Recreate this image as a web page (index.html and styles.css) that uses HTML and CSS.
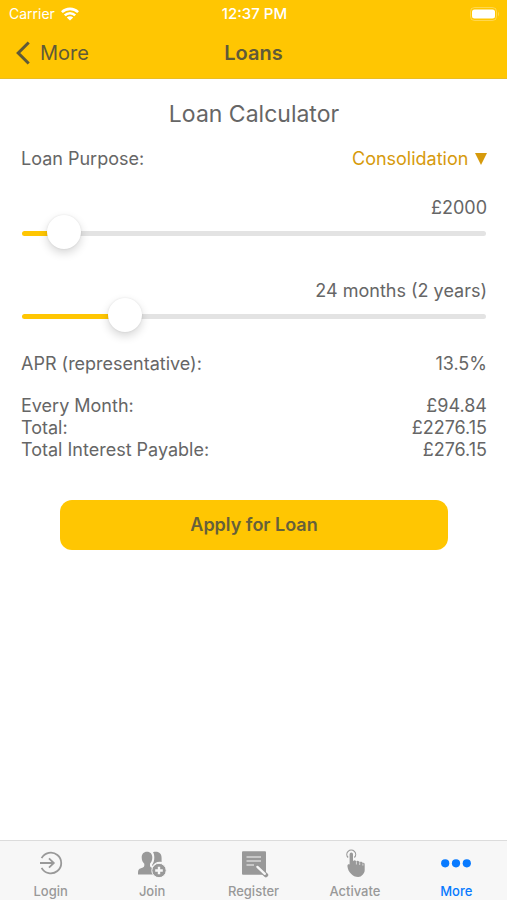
FILE: index.html
```html
<!DOCTYPE html>
<html lang="en">
<head>
<meta charset="utf-8">
<meta name="viewport" content="width=device-width, initial-scale=1">
<title>Loans</title>
<link rel="stylesheet" href="styles.css">
</head>
<body>
<header class="top">
  <div class="status">
    <span class="carrier">Carrier
      <svg width="18" height="14" viewBox="0 0 18 14" aria-hidden="true">
        <g fill="none" stroke="currentColor" stroke-width="2.6">
          <path d="M.9 5.2a11.5 11.5 0 0 1 16.2 0"/>
          <path d="M3.8 8.400a7.400 7.400 0 0 1 10.400 0"/>
        </g>
        <path fill="currentColor" d="M9 13.600 5.800 10.500a4.600 4.600 0 0 1 6.400 0z"/>
      </svg>
    </span>
    <span class="time">12:37 PM</span>
    <svg class="battery" width="30" height="14" viewBox="0 0 30 14" aria-hidden="true">
      <rect x=".5" y=".5" width="26" height="13" rx="4" fill="none" stroke="#fff" stroke-opacity=".3"/>
      <rect x="2" y="2.500" width="23" height="9" rx="2.500" fill="#fff"/>
      <path d="M28 4.500q2 2.500 0 5z" fill="#fff" fill-opacity=".3"/>
    </svg>
  </div>
  <nav class="bar">
    <a class="back" href="#more">
      <svg width="15" height="24" viewBox="0 0 15 24" aria-hidden="true"><path d="M13.700 1.500 3.200 12l10.500 10.500" fill="none" stroke="currentColor" stroke-width="3"/></svg>
      More
    </a>
    <h1 class="title">Loans</h1>
  </nav>
</header>

<main class="content">
  <h2 class="heading">Loan Calculator</h2>
  <div class="row purpose">
    <label for="purpose">Loan Purpose:</label>
    <span class="picker">
      <select id="purpose"><option>Consolidation</option></select>
      <svg width="12" height="12" viewBox="0 0 12 12" aria-hidden="true"><path d="M0 0h12L6 12z" fill="currentColor"/></svg>
    </span>
  </div>
  <div class="slider">
    <output for="amount">£2000</output>
    <input id="amount" type="range" min="1000" max="18000" step="100" value="2000" aria-label="Loan amount" style="--fill: 9%">
  </div>
  <div class="slider">
    <output for="term">24 months (2 years)</output>
    <input id="term" type="range" min="12" max="72" value="24" aria-label="Loan term" style="--fill: 22%">
  </div>
  <dl class="figures">
    <div class="row rate"><dt>APR (representative):</dt><dd>13.5%</dd></div>
    <div class="row"><dt>Every Month:</dt><dd>£94.84</dd></div>
    <div class="row"><dt>Total:</dt><dd>£2276.15</dd></div>
    <div class="row"><dt>Total Interest Payable:</dt><dd>£276.15</dd></div>
  </dl>
  <button class="apply" type="button">Apply for Loan</button>
</main>

<nav class="tabs">
  <a href="#login">
    <svg width="30" height="30" viewBox="0 0 30 30" aria-hidden="true">
      <g fill="none" stroke="currentColor" stroke-width="1.800">
        <path d="M5.600 10.200A10.400 10.400 0 1 1 5.600 19.800"/>
        <path d="M4 15h13.500M13 10.300l4.800 4.700-4.800 4.700"/>
      </g>
    </svg>
    Login
  </a>
  <a href="#join">
    <svg width="30" height="30" viewBox="0 0 30 30" aria-hidden="true">
      <g fill="currentColor">
        <path d="M10 3.800c3.400 0 5.300 2.300 5.300 5.700 0 2.800-1 5-2.300 6.200v2.100c0 1.600 1.900 2 3.600 2.700.2 2.400.2 4.100.2 6.100H1c0-4 .3-5.300 2.300-6.100 1.800-.7 4-1.100 4-2.700v-2.100C5.800 14.500 4.700 12.300 4.700 9.500c0-3.400 1.900-5.700 5.300-5.700z"/>
        <path d="M16 4.300c1-.4 1.700-.5 2.700-.5 4 0 5.900 2.300 5.900 6.100v4.200c-4-.9-7.500.8-9 4l-.6-1.100c1.500-1.700 2.300-4.400 2.300-7.300 0-2.300-.4-4-1.300-5.400z"/>
        <circle cx="22" cy="22.500" r="7.200" stroke="#f7f7f7"/>
      </g>
      <path d="M22 18.700v7.600M18.200 22.500h7.600" stroke="#f7f7f7" stroke-width="2.400"/>
    </svg>
    Join
  </a>
  <a href="#register">
    <svg width="30" height="30" viewBox="0 0 30 30" aria-hidden="true">
      <rect x="3" y="3.300" width="24" height="23.500" rx="1" fill="currentColor"/>
      <path d="M7.500 9h14.500M7.500 13h14.500M7.500 17H15" stroke="#f7f7f7" stroke-width="1.100"/>
      <path d="m17.800 18.300 9.200 8.800" stroke="currentColor" stroke-width="4.400" stroke-linecap="round"/>
      <path d="m18.400 18.900 7.400 7" stroke="#f7f7f7" stroke-width="2.300" stroke-linecap="round"/>
    </svg>
    Register
  </a>
  <a href="#activate">
    <svg width="30" height="30" viewBox="0 0 30 30" aria-hidden="true">
      <path d="M8.100 9.500a4.400 4.400 0 1 1 6.300 0" fill="none" stroke="currentColor" stroke-width="1.200"/>
      <path fill="currentColor" d="M9.600 6.200a1.700 1.700 0 0 1 3.400 0v7q.8-1 2-.8 1 .1 1.300 1 .8-.8 2-.5 1 .2 1.300 1.200.8-.7 1.900-.3 1 .4 1.200 1.200.8-.5 1.500.1.500.5.500 1.600V22c0 2-.8 3.300-1.800 4.500-1.500 1.700-3 2.500-4.700 2.500-3 0-5.200-1-6.900-3-2.500-2-3.500-5-3.900-8 .1-1.600 1-2 2.200-1.500z"/>
      <path d="M16.400 13.500v3M19.700 14.300v2.700M22.900 15.600v2" stroke="#f7f7f7" stroke-width=".7"/>
    </svg>
    Activate
  </a>
  <a class="active" href="#more" aria-current="page">
    <svg width="30" height="30" viewBox="0 0 30 30" aria-hidden="true">
      <g fill="currentColor"><circle cx="4.200" cy="15.300" r="4.100"/><circle cx="15" cy="15.300" r="4.100"/><circle cx="25.800" cy="15.300" r="4.100"/></g>
    </svg>
    More
  </a>
</nav>
</body>
</html>
```
FILE: styles.css
```css
* {
  box-sizing: border-box;
}

body {
  margin: 0;
  min-height: 100vh;
  display: flex;
  flex-direction: column;
  background: #fff;
  color: #666;
  font: 18px/22px Inter, "Liberation Sans", sans-serif;
}

a {
  color: inherit;
  text-decoration: none;
}

.top {
  background: #ffc602;
  border-bottom: 1px solid #e9bd24;
}

.status {
  display: grid;
  grid-template-columns: 1fr auto 1fr;
  align-items: center;
  height: 27px;
  padding: 0 7px 0 9px;
  color: #fff;
  font-size: 14px;
}

.carrier {
  display: flex;
  align-items: center;
  gap: 6px;
}

.time {
  font-size: 15px;
  font-weight: 500;
}

.battery {
  justify-self: end;
}

.bar {
  display: grid;
  grid-template-columns: 1fr auto 1fr;
  align-items: center;
  height: 51px;
  padding: 0 15px;
  color: #5f5a38;
  font-size: 20px;
}

.back {
  display: flex;
  align-items: center;
  gap: 10px;
}

.title {
  margin: 0;
  font-size: 20px;
  font-weight: 600;
}

.content {
  flex: 1;
  padding: 21px 20px 21px 21px;
}

.heading {
  margin: 0;
  font-size: 23px;
  font-weight: 400;
  line-height: 28px;
  text-align: center;
}

.row {
  display: flex;
  justify-content: space-between;
}

.purpose {
  margin: 20px 0 27px;
}

.picker {
  display: flex;
  align-items: center;
  gap: 6px;
  color: #d69a0c;
}

.picker select {
  appearance: none;
  border: 0;
  padding: 0;
  background: none;
  color: inherit;
  font: inherit;
}

.slider {
  margin-bottom: 33px;
  text-align: right;
}

.slider output {
  display: block;
}

.slider input {
  appearance: none;
  display: block;
  width: 100%;
  height: 28px;
  margin: 0;
  padding: 0 1px;
  background: none;
}

.slider input::-webkit-slider-runnable-track {
  height: 5px;
  border-radius: 3px;
  background: linear-gradient(to right, #ffc602 var(--fill), #e3e3e3 var(--fill));
}

.slider input::-webkit-slider-thumb {
  appearance: none;
  width: 34px;
  height: 34px;
  margin-top: -16px;
  border-radius: 50%;
  background: #fff;
  box-shadow: 0 4px 10px rgba(0, 0, 0, 0.16), 0 0 2px rgba(0, 0, 0, 0.1);
}

.figures {
  margin: -10px 0 39px;
}

.figures dd {
  margin: 0;
}

.rate {
  margin-bottom: 20px;
}

.apply {
  display: block;
  width: calc(100% - 78px);
  height: 50px;
  margin: 0 auto;
  border: 0;
  border-radius: 12px;
  background: #ffc602;
  color: #66603a;
  font: inherit;
  font-weight: 600;
}

.tabs {
  display: flex;
  height: 60px;
  border-top: 1px solid #dcdcdc;
  background: #f7f7f7;
  color: #999;
  font-size: 13px;
  font-weight: 500;
  line-height: 16px;
}

.tabs a {
  flex: 1 1 0;
  display: flex;
  flex-direction: column;
  align-items: center;
  gap: 5px;
  padding-top: 7px;
}

.tabs .active {
  color: #087aff;
}
```
